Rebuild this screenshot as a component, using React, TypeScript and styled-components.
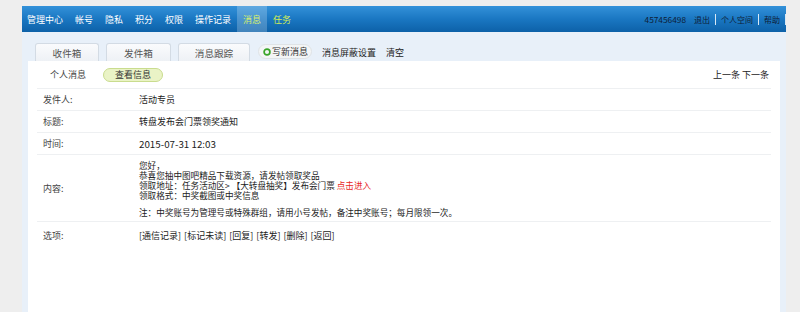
import styled, { createGlobalStyle } from 'styled-components'

const GlobalStyle = createGlobalStyle`
    *, *::before, *::after {
        box-sizing: border-box;
    }
    html, body {
        margin: 0;
        padding: 0;
        background: #eeeeee;
    }
    body {
        font-family: "Noto Sans CJK SC", "Liberation Sans", sans-serif;
        font-size: 9.6px;
        color: #333;
    }
`

const navItems = ['管理中心', '帐号', '隐私', '积分', '权限', '操作记录', '消息', '任务']
const tabs = [
    { text: '收件箱', width: 64 },
    { text: '发件箱', width: 65 },
    { text: '消息跟踪', width: 72 },
]
const rows = [
    { label: '发件人:', value: '活动专员' },
    { label: '标题:', value: '转盘发布会门票领奖通知' },
    { label: '时间:', value: '2015-07-31 12:03', big: true },
]
const options = ['通信记录', '标记未读', '回复', '转发', '删除', '返回']

const App = () => {
    return <Wrap>
        <GlobalStyle />
        <NavBar>
            <NavList>
                {navItems.map(item =>
                    <NavItem key={item} $active={item === '消息'} $task={item === '任务'}>{item}</NavItem>
                )}
            </NavList>
            <UserLinks>
                <span className="uid">457456498</span>
                <UserLink>退出</UserLink>
                <Sep />
                <UserLink>个人空间</UserLink>
                <Sep />
                <UserLink>帮助</UserLink>
                <Sep />
            </UserLinks>
        </NavBar>
        <Body>
            <TabBar>
                {tabs.map(t => <Tab key={t.text} $width={t.width}>{t.text}</Tab>)}
                <WriteBtn>
                    <svg width="8" height="8" viewBox="0 0 8 8">
                        <circle cx="4" cy="4" r="2.9" fill="none" stroke="#3aa52a" strokeWidth="1.7" />
                    </svg>
                    写新消息
                </WriteBtn>
                <PlainLink>消息屏蔽设置</PlainLink>
                <PlainLink>清空</PlainLink>
            </TabBar>
            <Panel>
                <PanelHead>
                    <div className="left">
                        <span>个人消息</span>
                        <Pill>查看信息</Pill>
                    </div>
                    <span className="pager">上一条 下一条</span>
                </PanelHead>
                {rows.map(r =>
                    <Row key={r.label}>
                        <Label>{r.label}</Label>
                        <Value $big={r.big}>{r.value}</Value>
                    </Row>
                )}
                <Row $tall>
                    <Label>内容:</Label>
                    <Content>
                        <div>您好，</div>
                        <div>恭喜您抽中图吧精品下载资源，请发帖领取奖品</div>
                        <div>领取地址：任务活动区&gt; 【大转盘抽奖】发布会门票 <RedLink>点击进入</RedLink></div>
                        <div>领取格式：中奖截图或中奖信息</div>
                        <div className="note">注：中奖账号为管理号或特殊群组，请用小号发帖，备注中奖账号；每月限领一次。</div>
                    </Content>
                </Row>
                <Row $last>
                    <Label>选项:</Label>
                    <Value>
                        {options.map(o => <OptLink key={o}>[{o}]</OptLink>)}
                    </Value>
                </Row>
            </Panel>
        </Body>
    </Wrap>
}

export default App

const Wrap = styled.div`
    width: 764px;
    margin: 6px 0 0 22px;
`

const NavBar = styled.div`
    height: 26px;
    display: flex;
    align-items: stretch;
    justify-content: space-between;
    background: linear-gradient(to bottom, #3391d9 0%, #1a77c2 50%, #0d61a8 100%);
`

const NavList = styled.div`
    display: flex;
    align-items: stretch;
`

const NavItem = styled.span<{ $active?: boolean; $task?: boolean }>`
    display: flex;
    align-items: center;
    padding: 0 6px;
    font-size: 9px;
    color: ${p => p.$active ? '#d9ef6e' : p.$task ? '#d4ee54' : '#fff'};
    background: ${p => p.$active ? 'rgba(255,255,255,0.22)' : 'transparent'};
    &:first-child {
        padding-left: 5px;
    }
`

const UserLinks = styled.div`
    display: flex;
    align-items: center;
    color: #0e1d36;
    font-size: 8px;
    .uid {
        margin-right: 3px;
        font-size: 8.3px;
    }
`

const UserLink = styled.span`
    padding: 0 5px;
`

const Sep = styled.span`
    width: 1px;
    height: 11px;
    background: #d8e8f5;
`

const Body = styled.div`
    background: #e8f0f9;
    padding: 0 6px;
    height: 280px;
`

const TabBar = styled.div`
    height: 29px;
    display: flex;
    align-items: flex-end;
    padding-left: 7px;
`

const Tab = styled.div<{ $width: number }>`
    width: ${p => p.$width}px;
    height: 18px;
    margin-right: 7px;
    display: flex;
    align-items: center;
    justify-content: center;
    border: 1px solid #d3dbe4;
    border-bottom: none;
    border-radius: 3px 3px 0 0;
    background: linear-gradient(to bottom, #fafbfd, #eef1f5);
    color: #555;
`

const WriteBtn = styled.div`
    height: 15px;
    margin: 0 10px 2px 1px;
    padding: 0 3px 0 4px;
    display: flex;
    align-items: center;
    gap: 1px;
    white-space: nowrap;
    border-radius: 8px;
    background: #f3f5f6;
    border: 1px solid #dfe3e6;
    color: #333;
    font-size: 9px;
`

const PlainLink = styled.span`
    height: 18px;
    display: flex;
    align-items: center;
    margin-right: 10px;
    color: #222;
    font-size: 9px;
`

const Panel = styled.div`
    background: #fff;
    height: 251px;
    padding: 0 9px;
`

const PanelHead = styled.div`
    height: 28px;
    display: flex;
    align-items: center;
    justify-content: space-between;
    border-bottom: 1px solid #eef0f2;
    font-size: 9px;
    .left {
        display: flex;
        align-items: center;
        padding-left: 13px;
        gap: 17px;
        color: #444;
    }
    .pager {
        color: #222;
        margin-right: 2px;
    }
`

const Pill = styled.span`
    width: 60px;
    height: 14px;
    display: flex;
    align-items: center;
    justify-content: center;
    border-radius: 8px;
    border: 1px solid #c9dc8e;
    background: #eaf3c6;
    color: #333;
`

const Row = styled.div<{ $tall?: boolean; $last?: boolean }>`
    display: flex;
    align-items: center;
    height: ${p => p.$tall ? 67 : p.$last ? 26 : 22}px;
    border-bottom: ${p => p.$last ? 'none' : '1px solid #eef0f2'};
`

const Label = styled.div`
    width: 102px;
    padding-left: 6px;
    color: #444;
    font-size: 9px;
`

const Value = styled.div<{ $big?: boolean }>`
    color: #222;
    font-size: ${p => p.$big ? 9.8 : 9}px;
`

const Content = styled.div`
    color: #222;
    font-size: 8.6px;
    div {
        height: 10px;
        line-height: 10px;
        white-space: nowrap;
    }
    .note {
        margin-top: 7px;
    }
`

const RedLink = styled.span`
    color: #e8261c;
`

const OptLink = styled.span`
    margin-right: 3px;
`
